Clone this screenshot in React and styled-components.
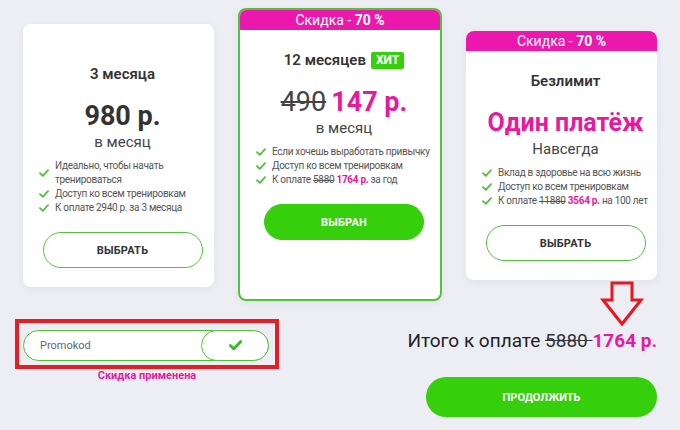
import React from 'react';
import styled, { createGlobalStyle } from 'styled-components';

const GREEN = '#35cf0c';
const LINE_GREEN = '#52c23c';
const PINK = '#e8199f';
const BAND_PINK = '#ec18ad';
const TEXT = '#3a3a3a';

const GlobalStyle = createGlobalStyle`
  html, body {
    margin: 0;
    padding: 0;
    background: #eceef3;
  }
  body {
    font-family: Roboto, "Open Sans", sans-serif;
    color: ${TEXT};
  }
`;

const Page = styled.div`
  width: 680px;
  height: 430px;
  box-sizing: border-box;
  padding: 8px 23px 0 15px;
  display: flex;
  flex-direction: column;
`;

const CardsRow = styled.div`
  display: flex;
  align-items: flex-start;
  gap: 24px;
  padding-left: 8px;
`;

const Card = styled.div`
  width: ${p => p.$width}px;
  margin-top: ${p => p.$offset}px;
  box-sizing: border-box;
  background: #fff;
  border-radius: 8px;
  border: ${p => (p.$selected ? `2px solid ${LINE_GREEN}` : 'none')};
  box-shadow: 0 2px 8px rgba(40, 50, 80, 0.06);
  overflow: hidden;
  padding-bottom: ${p => p.$bottom}px;
`;

const Band = styled.div`
  height: 20px;
  line-height: 20px;
  text-align: center;
  font-size: 14px;
  color: #fff;
  background: ${p => (p.$empty ? 'transparent' : BAND_PINK)};
  b {
    font-weight: 700;
  }
`;

const Body = styled.div`
  padding: 0 11px 0 19px;
  display: flex;
  flex-direction: column;
  align-items: center;
`;

const Title = styled.div`
  margin-top: 20px;
  height: 20px;
  line-height: 20px;
  font-size: 15px;
  font-weight: 600;
  color: #333;
  display: flex;
  align-items: center;
  gap: 5px;
`;

const Hit = styled.span`
  background: ${GREEN};
  color: #fff;
  font-size: 12px;
  font-weight: 800;
  line-height: 17px;
  padding: 0 5px;
  border-radius: 2px;
`;

const Price = styled.div`
  margin-top: 16px;
  height: 32px;
  line-height: 32px;
  font-size: ${p => p.$size || 27}px;
  font-weight: 700;
  color: ${p => (p.$pink ? PINK : '#333')};
  white-space: nowrap;
`;

const OldPrice = styled.s`
  font-weight: 400;
  color: #444;
  margin-right: 5px;
`;

const NewPrice = styled.span`
  color: ${PINK};
`;

const Sub = styled.div`
  margin-top: 1px;
  height: 18px;
  line-height: 18px;
  font-size: 15px;
  color: #444;
`;

const Features = styled.ul`
  list-style: none;
  margin: 8px -10px 0 -3px;
  padding: 0;
  align-self: stretch;
`;

const Feature = styled.li`
  display: flex;
  align-items: center;
  gap: 6px;
  font-size: 10px;
  letter-spacing: -0.3px;
  line-height: 14px;
  color: #555;
  span {
    white-space: ${p => (p.$wrap ? 'normal' : 'nowrap')};
    max-width: ${p => (p.$wrap ? '125px' : 'none')};
  }
  svg {
    flex: none;
  }
  s {
    color: #555;
  }
  b {
    color: ${PINK};
    font-weight: 700;
  }
`;

const ChoiceButton = styled.button`
  margin-top: 17px;
  width: 160px;
  height: 36px;
  border-radius: 18px;
  box-sizing: border-box;
  border: 1px solid ${p => (p.$active ? GREEN : LINE_GREEN)};
  background: ${p => (p.$active ? GREEN : '#fff')};
  color: ${p => (p.$active ? '#fff' : '#333')};
  font-family: inherit;
  font-size: 11px;
  font-weight: 700;
  letter-spacing: 0.2px;
  cursor: pointer;
`;

const BottomRow = styled.div`
  margin-top: 18px;
  display: flex;
  justify-content: space-between;
  align-items: flex-start;
`;

const PromoColumn = styled.div`
  display: flex;
  flex-direction: column;
  align-items: center;
`;

const PromoFrame = styled.div`
  width: 264px;
  height: 50px;
  box-sizing: border-box;
  border: 4px solid #e31e24;
  padding: 7px 6px 4px 4px;
`;

const PromoField = styled.div`
  height: 31px;
  box-sizing: border-box;
  border: 1px solid ${LINE_GREEN};
  border-radius: 16px;
  background: #fff;
  display: flex;
  align-items: center;
  justify-content: space-between;
`;

const PromoInput = styled.input`
  border: none;
  outline: none;
  background: transparent;
  font-family: inherit;
  font-size: 11px;
  color: #555;
  padding-left: 16px;
  width: 140px;
  &::placeholder {
    color: #666;
  }
`;

const PromoButton = styled.button`
  width: 68px;
  height: 31px;
  margin: -1px -1px -1px 0;
  box-sizing: border-box;
  border: 1px solid ${LINE_GREEN};
  border-radius: 16px;
  background: #fff;
  display: flex;
  align-items: center;
  justify-content: center;
  cursor: pointer;
`;

const PromoNote = styled.div`
  line-height: 14px;
  font-size: 11px;
  font-weight: 700;
  color: ${PINK};
`;

const TotalColumn = styled.div`
  position: relative;
  padding-top: 10px;
  display: flex;
  flex-direction: column;
  align-items: flex-end;
`;

const Total = styled.div`
  line-height: 24px;
  font-size: 19px;
  color: #222;
  white-space: nowrap;
  s {
    color: #333;
  }
  b {
    color: ${PINK};
    font-weight: 700;
  }
`;

const ArrowMark = styled.svg`
  position: absolute;
  right: 10px;
  top: -38px;
`;

const ContinueButton = styled.button`
  margin-top: 24px;
  width: 231px;
  height: 40px;
  border: none;
  border-radius: 20px;
  background: ${GREEN};
  color: #fff;
  font-family: inherit;
  font-size: 11px;
  font-weight: 700;
  cursor: pointer;
`;

const Check = ({ size = 10, color = LINE_GREEN, width = 1.8 }) => (
  <svg width={size} height={size * 0.8} viewBox="0 0 10 8">
    <path d="M1 4.2 L3.8 6.8 L9 1.2" fill="none" stroke={color} strokeWidth={width} strokeLinecap="round" strokeLinejoin="round" />
  </svg>
);

const plans = [
  {
    id: 'q',
    width: 191,
    offset: 16,
    bottom: 19,
    title: '3 месяца',
    price: <>980 р.</>,
    sub: 'в месяц',
    features: [
      'Идеально, чтобы начать тренироваться',
      'Доступ ко всем тренировкам',
      'К оплате 2940 р. за 3 месяца',
    ],
  },
  {
    id: 'y',
    width: 204,
    offset: 0,
    bottom: 59,
    selected: true,
    band: true,
    hit: true,
    title: '12 месяцев',
    price: <><OldPrice>490</OldPrice><NewPrice>147 р.</NewPrice></>,
    sub: 'в месяц',
    features: [
      'Если хочешь выработать привычку',
      'Доступ ко всем тренировкам',
      <>К оплате <s>5880</s> <b>1764 р.</b> за год</>,
    ],
  },
  {
    id: 'u',
    width: 191,
    offset: 23,
    bottom: 19,
    band: true,
    title: 'Безлимит',
    price: 'Один платёж',
    pricePink: true,
    priceSize: 25,
    sub: 'Навсегда',
    features: [
      'Вклад в здоровье на всю жизнь',
      'Доступ ко всем тренировкам',
      <>К оплате <s>11880</s> <b>3564 р.</b> на 100 лет</>,
    ],
  },
];

const PlanCard = ({ plan }) => (
  <Card $width={plan.width} $offset={plan.offset} $bottom={plan.bottom} $selected={plan.selected}>
    <Band $empty={!plan.band}>
      {plan.band ? <>Скидка - <b>70 %</b></> : null}
    </Band>
    <Body>
      <Title>
        {plan.title}
        {plan.hit ? <Hit>ХИТ</Hit> : null}
      </Title>
      <Price $pink={plan.pricePink} $size={plan.priceSize}>{plan.price}</Price>
      <Sub>{plan.sub}</Sub>
      <Features>
        {plan.features.map((f, i) => (
          <Feature key={i} $wrap={typeof f === 'string' && f.length > 34}>
            <Check />
            <span>{f}</span>
          </Feature>
        ))}
      </Features>
      <ChoiceButton $active={plan.selected}>{plan.selected ? 'ВЫБРАН' : 'ВЫБРАТЬ'}</ChoiceButton>
    </Body>
  </Card>
);

const App = () => (
  <>
    <GlobalStyle />
    <Page>
      <CardsRow>
        {plans.map(plan => <PlanCard key={plan.id} plan={plan} />)}
      </CardsRow>
      <BottomRow>
        <PromoColumn>
          <PromoFrame>
            <PromoField>
              <PromoInput placeholder="Promokod" />
              <PromoButton>
                <Check size={13} color="#3cb82a" width={2.2} />
              </PromoButton>
            </PromoField>
          </PromoFrame>
          <PromoNote>Скидка применена</PromoNote>
        </PromoColumn>
        <TotalColumn>
          <ArrowMark width="50" height="46" viewBox="0 0 50 46">
            <path
              d="M15 2 H35 V19 H44 L25 43 L6 19 H15 Z"
              fill="none"
              stroke="#e8161e"
              strokeWidth="3"
              strokeLinejoin="miter"
            />
          </ArrowMark>
          <Total>
            Итого к оплате <s>5880 </s><b>1764 р.</b>
          </Total>
          <ContinueButton>ПРОДОЛЖИТЬ</ContinueButton>
        </TotalColumn>
      </BottomRow>
    </Page>
  </>
);

export default App;
